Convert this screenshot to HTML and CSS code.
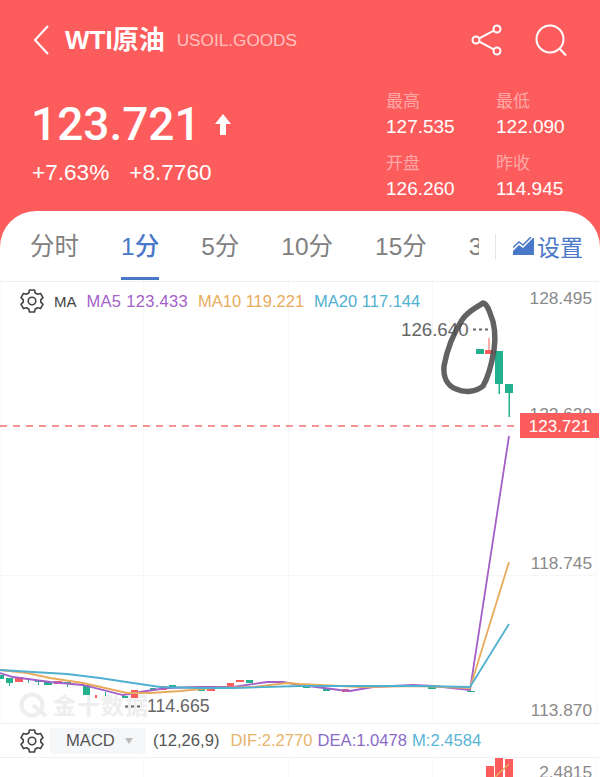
FILE: index.html
```html
<!DOCTYPE html>
<html>
<head>
<meta charset="utf-8">
<link rel="stylesheet" href="styles.css">
</head>
<body>
<div class="page">
<div class="hero">
<div class="topbar">
<svg class="back" width="16" height="30" viewBox="0 0 16 30"><path d="M15 1 L2 15 L15 29" fill="none" stroke="#fff" stroke-width="2"/></svg>
<span class="name">WTI原油</span>
<span class="code">USOIL.GOODS</span>
<svg class="share" width="32" height="32" viewBox="0 0 32 32"><g fill="none" stroke="#fff" stroke-width="2"><circle cx="5" cy="16" r="3.500"/><circle cx="26" cy="5" r="3.500"/><circle cx="26" cy="27" r="3.500"/><path d="M8.200 14.300 L22.800 6.700 M8.200 17.700 L22.800 25.300"/></g></svg>
<svg class="search" width="32" height="32" viewBox="0 0 32 32"><g fill="none" stroke="#fff" stroke-width="2"><circle cx="15" cy="15" r="13.500"/><path d="M24.500 24.500 L31 31.500"/></g></svg>
</div>
<div class="quote">
<div class="quote-main">
<div class="price-row">
<span class="price">123.721</span>
<svg width="16" height="21" viewBox="0 0 16 21"><path d="M8 0 L16 10 L11 10 L11 21 L5 21 L5 10 L0 10 Z" fill="#fff"/></svg>
</div>
<div class="change-row">
<span>+7.63%</span>
<span>+8.7760</span>
</div>
</div>
<div class="stats">
<div class="stat"><div class="stat-label">最高</div><div class="stat-value">127.535</div></div>
<div class="stat"><div class="stat-label">最低</div><div class="stat-value">122.090</div></div>
<div class="stat"><div class="stat-label">开盘</div><div class="stat-value">126.260</div></div>
<div class="stat"><div class="stat-label">昨收</div><div class="stat-value">114.945</div></div>
</div>
</div>
</div>

<div class="sheet">
<div class="tabs">
<div class="tab-list">
<span class="tab">分时</span>
<span class="tab active">1分</span>
<span class="tab">5分</span>
<span class="tab">10分</span>
<span class="tab">15分</span>
<span class="tab">30分</span>
</div>
<div class="tab-settings">
<svg width="22" height="18" viewBox="0 0 22 18"><path d="M0 18 L0 14 L6 8 L10 11 L20 1 L21 1 L21 18 Z" fill="#4a78c8"/><path d="M0 10.500 L6 5 L10 8 L18 0" fill="none" stroke="#4a78c8" stroke-width="1.500"/></svg>
<span>设置</span>
</div>
</div>

<div class="chart-main">
<svg class="canvas" width="600" height="441" viewBox="0 282 600 441">
<g class="grid">
<path d="M1 282 V723 M143.500 282 V723 M288.500 282 V723 M432.500 282 V723 M596.500 282 V723"/>
<path d="M0 429.500 H596 M0 575.500 H596"/>
</g>

<g class="watermark">
<circle cx="32" cy="705" r="10.500" fill="none" stroke="#eeeeee" stroke-width="4"/>
<path d="M33 705 L46 716" stroke="#eeeeee" stroke-width="4"/>
<text x="53" y="714">金十数据</text>
</g>

<text class="axis" x="592" y="304" text-anchor="end">128.495</text>
<text class="axis" x="592" y="420" text-anchor="end">122.620</text>
<text class="axis" x="592" y="569" text-anchor="end">118.745</text>
<text class="axis" x="592" y="716" text-anchor="end">113.870</text>

<g class="up">
<rect x="15" y="677" width="8" height="5"/>
<rect x="54" y="681" width="8" height="3"/>
<rect x="95" y="695" width="2" height="3"/>
<rect x="131" y="690" width="7" height="8"/>
<rect x="160" y="686" width="7" height="4"/>
<rect x="207" y="689" width="8" height="2"/>
<rect x="227" y="683" width="7" height="4"/>
<rect x="236" y="680" width="8" height="2"/>
<rect x="342" y="689" width="7" height="3"/>
<rect x="485" y="350" width="8" height="4"/>
<rect x="488.500" y="338" width="1" height="12"/>
</g>
<g class="down">
<rect x="0" y="675" width="4" height="4"/>
<rect x="6" y="678" width="7" height="5"/>
<rect x="9" y="683" width="1" height="3"/>
<rect x="28" y="679" width="1" height="4"/>
<rect x="35" y="680" width="7" height="2"/>
<rect x="38" y="682" width="1" height="3"/>
<rect x="44" y="682" width="8" height="3"/>
<rect x="64" y="682" width="7" height="2"/>
<rect x="67" y="684" width="1" height="3"/>
<rect x="83" y="685" width="7" height="10"/>
<rect x="105" y="692" width="1" height="4"/>
<rect x="122" y="696" width="6" height="2"/>
<rect x="150" y="688" width="6" height="2"/>
<rect x="169" y="685" width="7" height="2"/>
<rect x="198" y="689" width="7" height="2"/>
<rect x="246" y="680" width="7" height="3"/>
<rect x="303" y="686" width="7" height="2"/>
<rect x="323" y="688" width="7" height="3"/>
<rect x="428" y="686" width="8" height="3"/>
<rect x="467" y="691" width="8" height="1"/>
<rect x="476" y="349" width="8" height="5"/>
<rect x="495" y="351" width="8" height="33"/>
<rect x="498.500" y="384" width="1.500" height="10"/>
<rect x="505" y="384" width="8" height="9"/>
<rect x="508.500" y="393" width="1.500" height="24"/>
</g>

<polyline class="line ma5" points="0,673 13,677 50,682 83,685 123,695 140,692 167,688 200,687 233,687 267,682 283,682 300,685 340,690 350,691 373,687 413,685 433,686 470,690 509,436"/>
<polyline class="line ma10" points="0,670 27,673 50,678 83,683 127,693 150,693 180,691 213,688 253,687 287,683 300,684 360,687 420,686 470,688 509,562"/>
<polyline class="line ma20" points="0,670 33,672 67,674 100,678 133,683 160,687 200,688 233,688 300,686 360,686 420,686 470,687 509,624"/>

<line class="last-price" x1="0" y1="426" x2="520" y2="426"/>
<rect class="price-tag" x="520" y="413" width="79" height="25"/>
<text class="price-tag-text" x="559.500" y="432" text-anchor="middle">123.721</text>

<text class="extreme" x="401" y="336">126.640</text>
<line class="dots" x1="473" y1="329.500" x2="491" y2="329.500"/>
<text class="extreme low" x="147" y="712">114.665</text>
<line class="dots" x1="125" y1="706.500" x2="142" y2="706.500"/>

<path class="scribble" d="M483 303 C476 308 468 311 462 320 C453 334 447 350 444 366 C443 378 448 386 456 389 C465 393 476 392 483 386 C489 376 492 362 494 350 C496 336 494 322 490 313 C488 307 485 303 483 303 Z"/>
</svg>
<div class="legend">
<svg class="gear" width="24" height="24" viewBox="0 0 24 24"><path d="M9.500 2 L14.500 2 L15.200 5 L17.600 6.300 L20.500 5.400 L23 9.700 L20.800 11.800 L20.800 14.200 L23 16.300 L20.500 20.600 L17.600 19.700 L15.200 21 L14.500 24 L9.500 24 L8.800 21 L6.400 19.700 L3.500 20.600 L1 16.300 L3.200 14.200 L3.200 11.800 L1 9.700 L3.500 5.400 L6.400 6.300 L8.800 5 Z" transform="translate(0 -1)" fill="none" stroke="#444" stroke-width="1.600" stroke-linejoin="round"/><circle cx="12" cy="12" r="3.800" fill="none" stroke="#444" stroke-width="1.600"/></svg>
<span class="legend-title">MA</span>
<span class="c-ma5">MA5 123.433</span>
<span class="c-ma10">MA10 119.221</span>
<span class="c-ma20">MA20 117.144</span>
</div>
</div>

<div class="macd-bar">
<svg class="gear" width="24" height="24" viewBox="0 0 24 24"><path d="M9.500 2 L14.500 2 L15.200 5 L17.600 6.300 L20.500 5.400 L23 9.700 L20.800 11.800 L20.800 14.200 L23 16.300 L20.500 20.600 L17.600 19.700 L15.200 21 L14.500 24 L9.500 24 L8.800 21 L6.400 19.700 L3.500 20.600 L1 16.300 L3.200 14.200 L3.200 11.800 L1 9.700 L3.500 5.400 L6.400 6.300 L8.800 5 Z" transform="translate(0 -1)" fill="none" stroke="#444" stroke-width="1.600" stroke-linejoin="round"/><circle cx="12" cy="12" r="3.800" fill="none" stroke="#444" stroke-width="1.600"/></svg>
<div class="macd-select">
<span>MACD</span>
<i class="caret"></i>
</div>
<span class="macd-params">(12,26,9)</span>
<span class="c-dif">DIF:2.2770</span>
<span class="c-dea">DEA:1.0478</span>
<span class="c-m">M:2.4584</span>
</div>

<svg class="canvas-macd" width="600" height="19" viewBox="0 758 600 19">
<g class="grid"><path d="M143.500 758 V777 M288.500 758 V777 M432.500 758 V777 M596.500 758 V777"/></g>
<g class="up">
<rect x="486" y="766" width="8" height="11"/>
<rect x="495" y="758" width="8" height="19"/>
<rect x="505" y="759" width="8" height="18"/>
</g>
<line x1="495" y1="777" x2="509" y2="764" stroke="#e8ab5c" stroke-width="1.500"/>
<text class="axis" x="592" y="778" text-anchor="end">2.4815</text>
</svg>
</div>
</div>
</body>
</html>
```

FILE: styles.css
```css
* {
box-sizing: border-box;
}

body {
margin: 0;
background: white;
overflow: hidden;
font-family: "Liberation Sans", "Noto Sans CJK SC", sans-serif;
}

.page {
width: 600px;
height: 777px;
overflow: hidden;
background: #fd5c5c;
}

.hero {
height: 211px;
padding: 25px 33px 0 33px;
color: #fff;
}

.topbar {
display: flex;
align-items: center;
height: 30px;
}

.back {
margin-right: 16px;
}

.name {
font-size: 26px;
line-height: 30px;
font-weight: bold;
margin-right: 12px;
}

.code {
font-size: 17.200px;
color: #ffc0c0;
margin-right: auto;
}

.share {
margin-right: 32px;
}

.quote {
display: flex;
justify-content: space-between;
margin-top: 35px;
}

.quote-main {
padding-top: 10px;
}

.price-row {
display: flex;
align-items: center;
gap: 14px;
margin-left: -2px;
}

.price {
font-family: Roboto, "Liberation Sans", sans-serif;
font-size: 46px;
font-weight: 500;
line-height: 48px;
}

.change-row {
display: flex;
gap: 20px;
margin-top: 12px;
margin-left: -1px;
font-size: 22.600px;
line-height: 26px;
}

.stats {
display: grid;
grid-template-columns: 110px 69px;
row-gap: 12px;
margin-right: 2px;
}

.stat-label {
font-size: 17px;
line-height: 24px;
color: #ffa8a8;
}

.stat-value {
font-size: 19px;
line-height: 26px;
}

.sheet {
height: 566px;
background: #fff;
border-radius: 36px 36px 0 0;
}

.tabs {
display: flex;
align-items: center;
height: 71px;
padding-left: 30px;
border-bottom: 1px solid #f0f0f0;
}

.tab-list {
display: flex;
flex: none;
align-self: flex-start;
gap: 42px;
width: 449px;
height: 69px;
overflow: hidden;
}

.tab {
flex: none;
height: 100%;
padding-top: 21px;
font-size: 24.500px;
line-height: 30px;
color: #808080;
}

.tab.active {
color: #4a78c8;
font-weight: 500;
border-bottom: 3px solid #4a78c8;
}

.tab-settings {
display: flex;
flex: none;
align-items: center;
gap: 2px;
height: 25px;
margin-left: 16px;
padding-left: 17px;
border-left: 1px solid #e4e4e4;
font-size: 23px;
color: #4a78c8;
white-space: nowrap;
}

.chart-main {
position: relative;
height: 441px;
}

.canvas,
.canvas-macd {
display: block;
}

.grid path {
fill: none;
stroke: #f7f7f7;
stroke-width: 1;
}

.watermark text {
font-size: 23px;
font-weight: bold;
fill: #eeeeee;
letter-spacing: 1px;
}

.axis {
font-size: 17.300px;
fill: #8a8a8a;
}

.up rect {
fill: #fd5c5c;
}

.down rect {
fill: #22b08f;
}

.line {
fill: none;
stroke-width: 1.800;
}

.ma5 {
stroke: #a45fc9;
}

.ma10 {
stroke: #e8ab5c;
}

.ma20 {
stroke: #4fb0cf;
}

.last-price {
stroke: #f07070;
stroke-width: 1.500;
stroke-dasharray: 7 6;
}

.price-tag {
fill: #fd5c5c;
}

.price-tag-text {
font-size: 17px;
fill: #fff;
}

.extreme {
font-size: 18.700px;
fill: #666;
}

.extreme.low {
font-size: 17.700px;
}

.dots {
stroke: #666;
stroke-width: 2;
stroke-dasharray: 3 3;
}

.scribble {
fill: none;
stroke: #4d4d4d;
stroke-width: 5.500;
opacity: 0.88;
filter: blur(0.7px);
}

.legend {
position: absolute;
top: 7px;
left: 20px;
display: flex;
align-items: center;
gap: 10px;
font-size: 16.500px;
}

.legend-title {
font-size: 15px;
color: #444;
}

.c-ma5 {
color: #a45fc9;
letter-spacing: 0.3px;
}

.c-ma10 {
color: #e8ab5c;
}

.c-ma20 {
color: #4fb0cf;
}

.macd-bar {
display: flex;
align-items: center;
height: 35px;
padding-left: 20px;
border-top: 1px solid #f0f0f0;
border-bottom: 1px solid #f0f0f0;
font-size: 16.600px;
}

.macd-select {
display: flex;
align-items: center;
gap: 10px;
width: 96px;
height: 26px;
margin-left: 6px;
padding-left: 16px;
background: #f6f7f9;
color: #555;
}

.caret {
border: 4px solid transparent;
border-top: 6px solid #bbb;
border-bottom: 0;
}

.macd-params {
margin-left: 7px;
color: #555;
}

.c-dif {
margin-left: 11px;
color: #e8b56c;
}

.c-dea {
margin-left: 5px;
color: #8a6cc8;
}

.c-m {
margin-left: 5px;
color: #5ab4d6;
}
```
